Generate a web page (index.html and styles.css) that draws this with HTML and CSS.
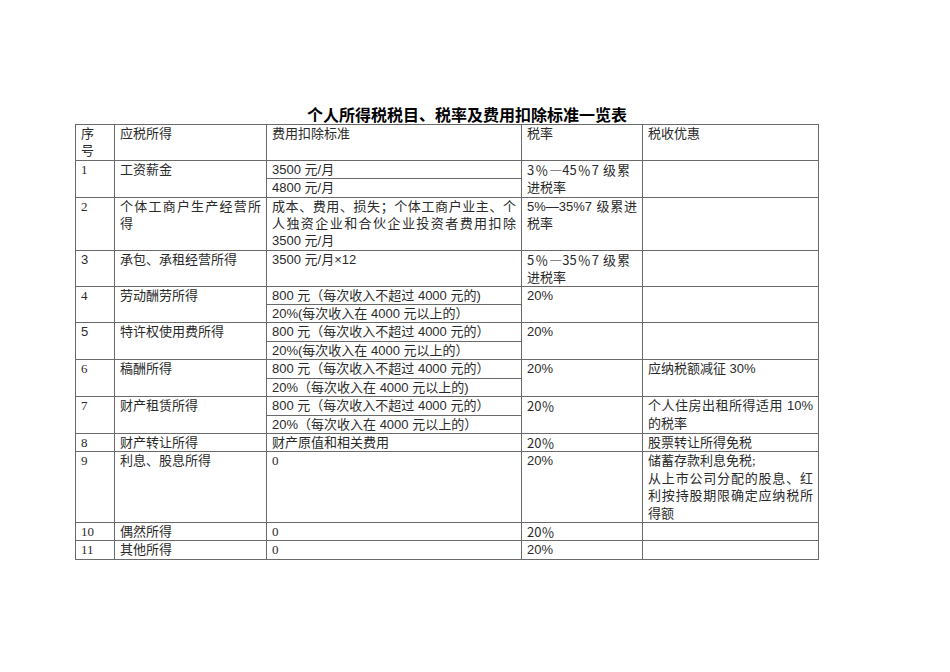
FILE: index.html
```html
<!DOCTYPE html>
<html lang="zh">
<head>
<meta charset="utf-8">
<link rel="stylesheet" href="styles.css">
<title>个人所得税税目、税率及费用扣除标准一览表</title>
</head>
<body>
<div class="page">
  <div class="title">个人所得税税目、税率及费用扣除标准一览表</div>
  <table class="tax">
    <colgroup>
      <col class="c1"><col class="c2"><col class="c3"><col class="c4"><col class="c5">
    </colgroup>
    <tr>
      <td>序<br>号</td>
      <td>应税所得</td>
      <td>费用扣除标准</td>
      <td>税率</td>
      <td>税收优惠</td>
    </tr>
    <tr>
      <td rowspan="2">1</td>
      <td rowspan="2">工资薪金</td>
      <td class="s">3500 元/月</td>
      <td rowspan="2" class="k">3％—45％7 级累进税率</td>
      <td rowspan="2"></td>
    </tr>
    <tr><td class="s">4800 元/月</td></tr>
    <tr>
      <td>2</td>
      <td>个体工商户生产经营所得</td>
      <td>成本、费用、损失；个体工商户业主、个人独资企业和合伙企业投资者费用扣除 <span class="s">3500 元/月</span></td>
      <td class="s">5%—35%7 级累进税率</td>
      <td></td>
    </tr>
    <tr>
      <td class="s">3</td>
      <td>承包、承租经营所得</td>
      <td class="s">3500 元/月×12</td>
      <td class="k">5％—35％7 级累进税率</td>
      <td></td>
    </tr>
    <tr>
      <td rowspan="2">4</td>
      <td rowspan="2">劳动酬劳所得</td>
      <td class="s">800 元（每次收入不超过 4000 元的)</td>
      <td rowspan="2" class="s">20%</td>
      <td rowspan="2"></td>
    </tr>
    <tr><td class="s">20%(每次收入在 4000 元以上的）</td></tr>
    <tr>
      <td rowspan="2" class="s">5</td>
      <td rowspan="2">特许权使用费所得</td>
      <td class="s">800 元（每次收入不超过 4000 元的）</td>
      <td rowspan="2" class="s">20%</td>
      <td rowspan="2"></td>
    </tr>
    <tr><td class="s">20%(每次收入在 4000 元以上的）</td></tr>
    <tr>
      <td rowspan="2">6</td>
      <td rowspan="2">稿酬所得</td>
      <td class="s">800 元（每次收入不超过 4000 元的）</td>
      <td rowspan="2" class="s">20%</td>
      <td rowspan="2" class="s">应纳税额减征 30%</td>
    </tr>
    <tr><td class="s">20%（每次收入在 4000 元以上的)</td></tr>
    <tr>
      <td rowspan="2">7</td>
      <td rowspan="2">财产租赁所得</td>
      <td class="s">800 元（每次收入不超过 4000 元的）</td>
      <td rowspan="2" class="k">20％</td>
      <td rowspan="2" class="s">个人住房出租所得适用 10%的税率</td>
    </tr>
    <tr><td class="s">20%（每次收入在 4000 元以上的）</td></tr>
    <tr>
      <td>8</td>
      <td>财产转让所得</td>
      <td>财产原值和相关费用</td>
      <td class="k">20％</td>
      <td>股票转让所得免税</td>
    </tr>
    <tr>
      <td>9</td>
      <td>利息、股息所得</td>
      <td>0</td>
      <td class="s">20%</td>
      <td>储蓄存款利息免税;<br>从上市公司分配的股息、红利按持股期限确定应纳税所得额</td>
    </tr>
    <tr>
      <td>10</td>
      <td>偶然所得</td>
      <td>0</td>
      <td class="k">20％</td>
      <td></td>
    </tr>
    <tr>
      <td>11</td>
      <td>其他所得</td>
      <td>0</td>
      <td class="s">20%</td>
      <td></td>
    </tr>
  </table>
</div>
</body>
</html>
```

FILE: styles.css
```css
html, body {
  margin: 0;
  padding: 0;
  background: #ffffff;
}

.page {
  padding: 104px 0 0 75px;
  font-family: "Liberation Serif", "Noto Sans CJK SC", serif;
  color: #2a2a2a;
}

.title {
  width: 743px;
  padding-left: 41px;
  box-sizing: border-box;
  text-align: center;
  font-family: "Noto Sans CJK SC", sans-serif;
  font-weight: bold;
  font-size: 16px;
  line-height: 20px;
  color: #000;
}

.tax {
  border-collapse: collapse;
  table-layout: fixed;
  width: 743px;
  font-size: 13px;
  line-height: 17.4px;
}

.c1 { width: 39px; }
.c2 { width: 152px; }
.c3 { width: 255px; }
.c4 { width: 121px; }
.c5 { width: 176px; }

.tax td {
  border: 1px solid #6a6a6a;
  padding: 0 5px 0 5px;
  vertical-align: top;
  text-align: justify;
  word-break: normal;
  overflow: hidden;
}

.s {
  font-family: "Liberation Sans", "Noto Sans CJK SC", sans-serif;
}

.tax td.k {
  font-family: "Noto Sans CJK SC", sans-serif;
  padding-right: 12px;
}
```
